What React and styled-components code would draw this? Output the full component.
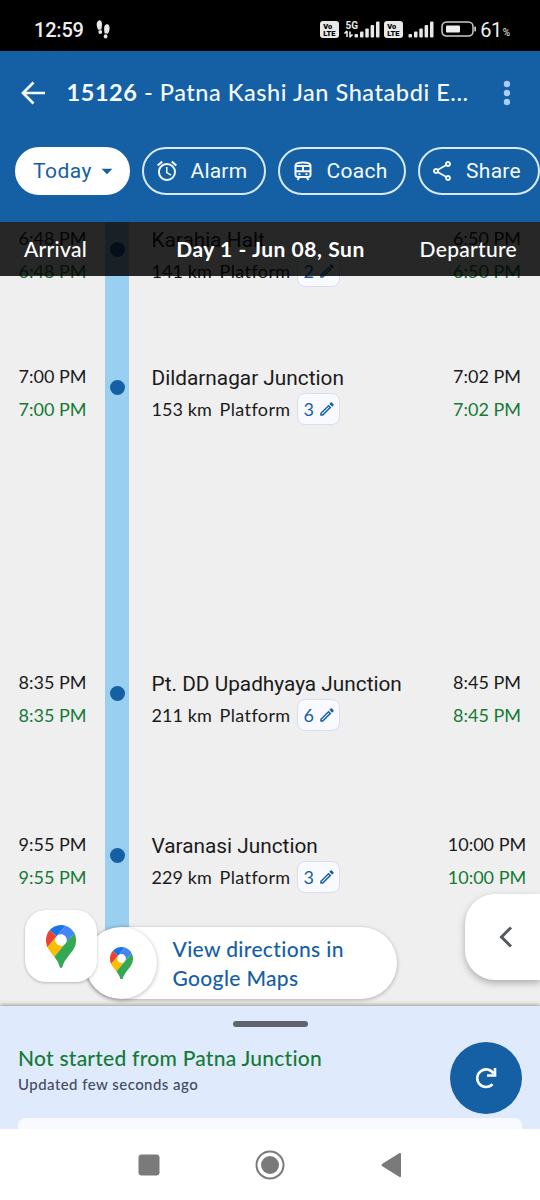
import styled, { createGlobalStyle } from "styled-components";
import {
  MdAccessAlarm,
  MdArrowDropDown,
  MdOutlineEdit,
  MdOutlineShare,
} from "react-icons/md";

const GlobalStyle = createGlobalStyle`
  * {
    box-sizing: border-box;
  }
  body {
    margin: 0;
    font-family: Lato, "Open Sans", sans-serif;
  }
`;
const Screen = styled.div`
  width: 540px;
  height: 1200px;
  display: flex;
  flex-direction: column;
  overflow: hidden;
  background: #efefef;
`;
const Text = styled.span`
  white-space: nowrap;
  font-size: ${(props) => props.$size}px;
  line-height: ${(props) => props.$line || 24}px;
  font-weight: ${(props) => props.$weight || 400};
  letter-spacing: ${(props) => props.$spacing || 0}px;
  color: ${(props) => props.$color || "inherit"};
`;
const StatusBar = styled.div`
  height: 51px;
  flex-shrink: 0;
  background: #000;
  color: #eee;
  display: flex;
  align-items: center;
  gap: 12px;
  padding: 8px 30px 0 34px;
  font-family: Roboto, sans-serif;
`;
const StatusIcons = styled.div`
  margin-left: auto;
  display: flex;
  align-items: center;
`;
const Volte = styled.div`
  width: 19px;
  height: 17px;
  border-radius: 3px;
  background: #e8e8e8;
  color: #000;
  font: 900 7.5px/7px Roboto, sans-serif;
  padding: 2px 0 0 3px;
`;
const Network = styled.div`
  height: 17px;
  margin: 0 ${(props) => props.$after}px 0 5px;
  display: flex;
`;
const BatteryLevel = styled.div`
  display: flex;
  margin-left: 3px;
`;
const Percent = styled.span`
  font-size: 10px;
  line-height: 12px;
  padding-top: 9px;
  margin-left: 1px;
`;
const Header = styled.header`
  height: 171px;
  flex-shrink: 0;
  background: #1560a5;
  color: #f4faff;
`;
const TitleRow = styled.div`
  height: 84px;
  display: flex;
  align-items: center;
  padding: 0 28px 0 21px;
`;
const Title = styled.h1`
  margin: 0 auto 2px 21.5px;
  font-size: 23.5px;
  line-height: 30px;
  font-weight: 500;
  letter-spacing: 0.56px;
  white-space: nowrap;
  b {
    font-weight: 700;
  }
`;
const Chips = styled.div`
  display: flex;
  gap: 12px;
  padding: 12px 0 0 15px;
`;
const Chip = styled.button`
  flex: none;
  width: ${(props) => props.$width}px;
  height: 48px;
  padding: 0 0 0 ${(props) => props.$pad}px;
  border: 2px solid ${(props) => (props.$active ? "#fff" : "#d8eafa")};
  border-radius: 24px;
  background: ${(props) => (props.$active ? "#fff" : "transparent")};
  color: ${(props) => (props.$active ? "#1560a5" : "#f4faff")};
  display: flex;
  align-items: center;
  gap: ${(props) => props.$gap}px;
  font-family: Roboto, sans-serif;
`;
const Timeline = styled.main`
  position: relative;
  height: 784px;
  flex-shrink: 0;
`;
const DayBar = styled.div`
  position: absolute;
  inset: 0 0 auto;
  height: 54px;
  background: rgba(0, 0, 0, 0.84);
  color: #fff;
  display: grid;
  grid-template-columns: 1fr auto 1fr;
  align-items: center;
  padding: 0 23px 1px 24px;
  > :last-child {
    justify-self: end;
  }
`;
const Stop = styled.div`
  display: grid;
  grid-template-columns: 105px 24px 1fr 106px;
  height: ${(props) => props.$height}px;
`;
const Times = styled.div`
  display: flex;
  flex-direction: column;
  align-items: center;
  gap: 9px;
  padding-top: 4px;
  color: #1b1b1b;
`;
const Track = styled.div`
  background: #99cff0;
  display: flex;
  justify-content: center;
  padding-top: 19.5px;
`;
const Dot = styled.div`
  width: 15px;
  height: 15px;
  border-radius: 50%;
  background: #1560a5;
`;
const Station = styled.div`
  padding: 6px 0 0 22.5px;
  color: #1b1b1b;
`;
const StationName = styled.div`
  font: 400 20.8px/24px Roboto, sans-serif;
  white-space: nowrap;
`;
const Details = styled.div`
  display: flex;
  align-items: center;
  margin-top: 3px;
`;
const Distance = styled.div`
  width: 68px;
`;
const Platform = styled.div`
  width: 43px;
  height: 32px;
  margin-left: 6px;
  padding-left: 6px;
  border: 1px solid #d9deee;
  border-radius: 8px;
  background: #f9faff;
  color: #1560a5;
  display: flex;
  align-items: center;
  gap: 4px;
`;
const MapsButton = styled.button`
  position: absolute;
  left: 25px;
  top: 688px;
  width: 72px;
  height: 72px;
  padding: 0;
  border: 0;
  border-radius: 21px;
  background: #fff;
  box-shadow: 0 1px 3px rgba(0, 0, 0, 0.25);
  display: flex;
  align-items: center;
  justify-content: center;
`;
const Directions = styled.div`
  position: absolute;
  left: 85px;
  top: 705px;
  width: 312px;
  height: 72px;
  border-radius: 36px;
  background: #fff;
  box-shadow: 0 1px 4px rgba(0, 0, 0, 0.28);
  color: #1560a5;
  display: flex;
  align-items: center;
  gap: 15.5px;
`;
const DirectionsIcon = styled.div`
  width: 72px;
  height: 72px;
  border-radius: 50%;
  box-shadow: 0 1px 4px rgba(0, 0, 0, 0.28);
  display: flex;
  align-items: center;
  justify-content: center;
`;
const DirectionsLabel = styled.div`
  display: flex;
  flex-direction: column;
  padding-bottom: 1px;
`;
const SideTab = styled.button`
  position: absolute;
  right: 0;
  top: 672px;
  width: 75px;
  height: 86px;
  padding: 0 0 0 33px;
  border: 0;
  border-radius: 30px 0 0 30px;
  background: #fff;
  box-shadow: 0 3px 7px rgba(0, 0, 0, 0.28);
  display: flex;
  align-items: center;
`;
const Sheet = styled.section`
  position: relative;
  height: 123px;
  flex-shrink: 0;
  background: #e0eafd;
  box-shadow: 0 -1px 4px rgba(60, 60, 40, 0.5);
  display: flex;
  flex-direction: column;
  padding: 15px 18px 0;
`;
const Handle = styled.div`
  width: 75px;
  height: 6px;
  border-radius: 3px;
  background: #5f636b;
  align-self: center;
`;
const SheetRow = styled.div`
  display: flex;
  justify-content: space-between;
  margin-top: 15px;
`;
const SheetText = styled.div`
  display: flex;
  flex-direction: column;
  padding-top: 2px;
`;
const Refresh = styled.button`
  width: 72px;
  height: 72px;
  padding: 0;
  border: 0;
  border-radius: 50%;
  background: #1560a5;
  display: flex;
  align-items: center;
  justify-content: center;
`;
const SheetCard = styled.div`
  height: 11px;
  margin-top: 4px;
  border-radius: 7px 7px 0 0;
  background: #f9faff;
`;
const NavBar = styled.nav`
  position: relative;
  height: 71px;
  flex-shrink: 0;
  background: #fff;
  display: flex;
  align-items: center;
  padding-left: 137.5px;
  gap: 95.5px;
`;

const Footsteps = () => (
  <svg width="15" height="20" viewBox="0 0 15 20" fill="#e8e8e8">
    <path d="M3.100.4C5 .1 6.200 2.200 6 5l-.6 4.400L2.100 9.700C1.200 7.800.6 6.100.7 4.100.8 2 1.600.7 3.100.4z" />
    <ellipse cx="4.300" cy="12" rx="1.900" ry="2.100" />
    <path d="M11.300 4.300c-2-.2-3.300 1.900-3.200 4.600l.4 4.400 3.500.5c1-1.900 1.600-3.600 1.600-5.500 0-2.200-.8-3.900-2.300-4z" />
    <ellipse cx="9.600" cy="16.400" rx="1.900" ry="2.100" />
  </svg>
);

const Bars = ({ start = 0 }) => (
  <svg width={26 + start} height="17" viewBox={`${-start} 0 ${26 + start} 17`} fill="#e8e8e8" overflow="visible">
    <rect x="0.500" y="13" width="3.500" height="3.500" rx="1" />
    <rect x="6" y="10.500" width="3.500" height="6" rx="1" />
    <rect x="11.300" y="7.500" width="3.500" height="9" rx="1" />
    <rect x="16.600" y="4" width="3.500" height="12.500" rx="1" />
    <rect x="22" y="0.500" width="3.500" height="16" rx="1" />
    {start > 0 && (
      <>
        <path d="M-7 10v6M-9.500 12.500l2.500-2.500M-4 10.500v6M-4 16l2.500-2.500" fill="none" stroke="#e8e8e8" strokeWidth="1.600" />
        <text x="-8.500" y="7.500" fontSize="10" fontWeight="700" fontFamily="Roboto">5G</text>
      </>
    )}
  </svg>
);

const Battery = () => (
  <svg width="36" height="17" viewBox="0 0 36 17">
    <rect x="1" y="1" width="31" height="14" rx="4.500" fill="none" stroke="#ccc" strokeWidth="1.500" />
    <rect x="5" y="4.500" width="14" height="7" rx="1" fill="#eee" />
    <rect x="33.300" y="5.500" width="1.700" height="5" rx=".7" fill="#ccc" />
  </svg>
);

const MapsPin = ({ width }) => (
  <svg width={width} viewBox="0 0 92.300 132.300">
    <path fill="#1a73e8" d="M60.200 2.200C55.800.8 51 0 46.100 0 32 0 19.300 6.400 10.800 16.500l21.800 18.300L60.200 2.200z" />
    <path fill="#ea4335" d="M10.800 16.500C4.100 24.500 0 34.900 0 46.100c0 8.700 1.700 15.700 4.600 22l28-33.300-21.800-18.300z" />
    <path fill="#4285f4" d="M46.200 28.500c9.800 0 17.700 7.900 17.700 17.700 0 4.300-1.600 8.300-4.200 11.400 0 0 13.900-16.600 27.500-32.700-5.600-10.800-15.300-19-27-22.700L32.600 34.800c3.300-3.800 8.100-6.300 13.600-6.300" />
    <path fill="#fbbc04" d="M46.200 63.800c-9.800 0-17.700-7.900-17.700-17.700 0-4.300 1.500-8.300 4.100-11.300l-28 33.300c4.800 10.600 12.800 19.200 21 29.900l34.100-40.500c-3.300 3.900-8.100 6.300-13.500 6.300" />
    <path fill="#34a853" d="M59.100 109.200c15.400-24.100 33.300-35 33.300-63 0-7.700-1.900-14.900-5.200-21.300L25.600 98c2.600 3.400 5.300 7.300 7.900 11.300 9.400 14.500 6.800 23.100 12.800 23.100s3.400-8.700 12.800-23.200" />
  </svg>
);

const TrainIcon = () => (
  <svg width="18" height="20" viewBox="0 0 18 20" fill="none" stroke="currentColor" strokeWidth="2">
    <path d="M1.500 13.500V4.500C1.500 2 4 1.500 9 1.500s7.500.5 7.500 3v9c0 1.500-1 2.500-2.500 2.500H4c-1.500 0-2.500-1-2.500-2.500zM1.500 5h15M1.500 10.200h15M9 5v5" />
    <path d="M5.500 16l-2 3M12.500 16l2 3" />
    <circle cx="5.500" cy="13.200" r="1.100" fill="currentColor" stroke="none" />
    <circle cx="12.500" cy="13.200" r="1.100" fill="currentColor" stroke="none" />
  </svg>
);

const stops = [
  { name: "Karahia Halt", km: 141, platform: 2, arrival: "6:48 PM", departure: "6:50 PM", height: 138 },
  { name: "Dildarnagar Junction", km: 153, platform: 3, arrival: "7:00 PM", departure: "7:02 PM", height: 306 },
  { name: "Pt. DD Upadhyaya Junction", km: 211, platform: 6, arrival: "8:35 PM", departure: "8:45 PM", height: 162 },
  { name: "Varanasi Junction", km: 229, platform: 3, arrival: "9:55 PM", departure: "10:00 PM", height: 110 },
];

const TimePair = ({ time }) => (
  <Times>
    <Text $size={18}>{time}</Text>
    <Text $size={18} $color="#147a36">{time}</Text>
  </Times>
);

const App = () => {
  return (
    <>
      <GlobalStyle />
      <Screen>
        <StatusBar>
          <Text $size={20} $weight={500} $spacing={-0.2}>12:59</Text>
          <Footsteps />
          <StatusIcons>
            <Volte>Vo<br />LTE</Volte>
            <Network $after={4}><Bars start={10} /></Network>
            <Volte>Vo<br />LTE</Volte>
            <Network $after={7}><Bars /></Network>
            <Battery />
            <BatteryLevel>
              <Text $size={20} $spacing={-0.5}>61</Text>
              <Percent>%</Percent>
            </BatteryLevel>
          </StatusIcons>
        </StatusBar>
        <Header>
          <TitleRow>
            <svg width="24" height="24" viewBox="0 0 24 24" fill="none" stroke="currentColor" strokeWidth="2.700">
              <path d="M24 12H2M12.500 1.500L2 12l10.500 10.500" />
            </svg>
            <Title><b>15126</b> - Patna Kashi Jan Shatabdi E...</Title>
            <svg width="10" height="26" viewBox="0 0 10 26" fill="#a9cdf5">
              <circle cx="5" cy="4" r="3.200" />
              <circle cx="5" cy="13" r="3.200" />
              <circle cx="5" cy="22" r="3.200" />
            </svg>
          </TitleRow>
          <Chips>
            <Chip $active $width={115} $pad={16} $gap={2}>
              <Text $size={21} $spacing={0.5}>Today</Text>
              <MdArrowDropDown size={26} />
            </Chip>
            <Chip $width={124} $pad={10.5} $gap={12}>
              <MdAccessAlarm size={24} />
              <Text $size={21} $spacing={0.2}>Alarm</Text>
            </Chip>
            <Chip $width={128} $pad={13.5} $gap={15}>
              <TrainIcon />
              <Text $size={21} $spacing={0.3}>Coach</Text>
            </Chip>
            <Chip $width={122} $pad={10} $gap={12}>
              <MdOutlineShare size={24} />
              <Text $size={21} $spacing={0.3}>Share</Text>
            </Chip>
          </Chips>
        </Header>
        <Timeline>
          {stops.map((stop) => (
            <Stop key={stop.name} $height={stop.height}>
              <TimePair time={stop.arrival} />
              <Track><Dot /></Track>
              <Station>
                <StationName>{stop.name}</StationName>
                <Details>
                  <Distance>
                    <Text $size={18} $spacing={0.1}>{stop.km} km</Text>
                  </Distance>
                  <Text $size={18} $spacing={0.4}>Platform</Text>
                  <Platform>
                    <Text $size={18}>{stop.platform}</Text>
                    <MdOutlineEdit size={18} />
                  </Platform>
                </Details>
              </Station>
              <TimePair time={stop.departure} />
            </Stop>
          ))}
          <DayBar>
            <Text $size={21} $weight={500} $spacing={0.3}>Arrival</Text>
            <Text $size={21} $weight={700} $spacing={0.55}>Day 1 - Jun 08, Sun</Text>
            <Text $size={21} $weight={500} $spacing={0.3}>Departure</Text>
          </DayBar>
          <Directions>
            <DirectionsIcon><MapsPin width={23} /></DirectionsIcon>
            <DirectionsLabel>
              <Text $size={21} $line={29} $weight={500} $spacing={0.35}>View directions in</Text>
              <Text $size={21} $line={29} $weight={500} $spacing={0.35}>Google Maps</Text>
            </DirectionsLabel>
          </Directions>
          <MapsButton><MapsPin width={30} /></MapsButton>
          <SideTab>
            <svg width="16" height="22" viewBox="0 0 16 22" fill="none" stroke="#55585c" strokeWidth="3">
              <path d="M13 1.500L3.500 11l9.500 9.500" />
            </svg>
          </SideTab>
        </Timeline>
        <Sheet>
          <Handle />
          <SheetRow>
            <SheetText>
              <Text $size={21} $line={28} $weight={500} $spacing={0.25} $color="#147a36">Not started from Patna Junction</Text>
              <Text $size={15} $weight={500} $spacing={0.45} $color="#444a5c">Updated few seconds ago</Text>
            </SheetText>
            <Refresh>
              <svg width="22" height="22" viewBox="0 0 22 22" fill="none" stroke="#fff" strokeWidth="2.600">
                <path d="M17.500 17.200A8.800 8.800 0 1 1 18.500 6.500M20 1v7.500h-8" />
              </svg>
            </Refresh>
          </SheetRow>
          <SheetCard />
        </Sheet>
        <NavBar>
          <svg width="22" height="22" viewBox="0 0 22 22" fill="#7a7a7a">
            <rect x="0.500" y="0.500" width="21" height="21" rx="3" />
          </svg>
          <svg width="30" height="30" viewBox="0 0 30 30" fill="#7a7a7a">
            <circle cx="15" cy="15" r="13.500" fill="none" stroke="#7a7a7a" strokeWidth="2" />
            <circle cx="15" cy="15" r="9" />
          </svg>
          <svg width="20" height="26" viewBox="0 0 20 26" fill="#7a7a7a">
            <path d="M18.500 1Q20 .5 20 2v22q0 1.500-1.500 1L1 14q-1-1 0-2z" />
          </svg>
        </NavBar>
      </Screen>
    </>
  );
};

export default App;
